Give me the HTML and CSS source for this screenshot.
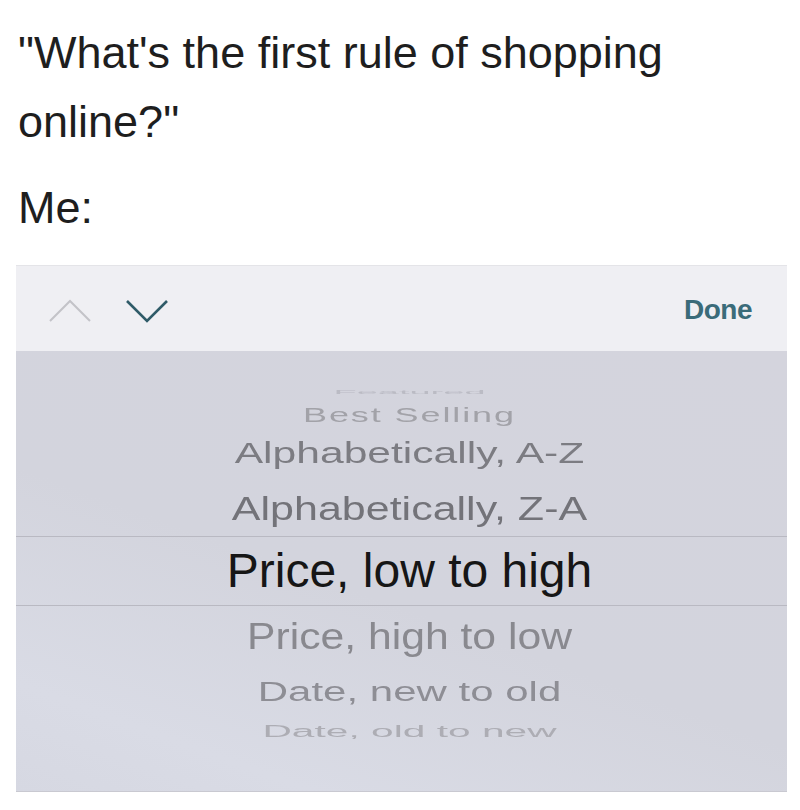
FILE: index.html
```html
<!DOCTYPE html>
<html lang="en">
<head>
<meta charset="utf-8">
<title>First rule of shopping online</title>
<link rel="stylesheet" href="styles.css">
</head>
<body>
<div class="page">
  <p class="caption">"What's the first rule of shopping online?"</p>
  <p class="caption me">Me:</p>
  <div class="panel">
    <div class="toolbar">
      <div class="arrows">
        <svg class="chev up" width="44" height="24" viewBox="0 0 44 24"><path d="M2 22 L22 2 L42 22" fill="none" stroke="#c3c3c8" stroke-width="2"/></svg>
        <svg class="chev down" width="44" height="24" viewBox="0 0 44 24"><path d="M2 2 L22 22 L42 2" fill="none" stroke="#2f5b68" stroke-width="2.6"/></svg>
      </div>
      <span class="done">Done</span>
    </div>
    <div class="picker">
      <div class="row r-featured"><span>Featured</span></div>
      <div class="row r-best"><span>Best Selling</span></div>
      <div class="row r-az"><span>Alphabetically, A-Z</span></div>
      <div class="row r-za"><span>Alphabetically, Z-A</span></div>
      <div class="row r-sel"><span>Price, low to high</span></div>
      <div class="row r-high"><span>Price, high to low</span></div>
      <div class="row r-new"><span>Date, new to old</span></div>
      <div class="row r-old"><span>Date, old to new</span></div>
    </div>
  </div>
</div>
</body>
</html>
```

FILE: styles.css
```css
html, body {
  margin: 0;
  padding: 0;
  background: #ffffff;
}

.page {
  width: 800px;
  height: 810px;
  overflow: hidden;
  font-family: "Liberation Sans", Arial, sans-serif;
}

.caption {
  margin: 18px 0 0 18px;
  width: 700px;
  font-size: 45px;
  line-height: 69px;
  color: #1e1e1e;
}

.caption.me {
  margin-top: 17px;
}

.panel {
  margin: 23px 0 0 16px;
  width: 771px;
  display: flex;
  flex-direction: column;
}

.toolbar {
  height: 86px;
  box-sizing: border-box;
  border-top: 1px solid #e4e4e8;
  background: #efeff3;
  display: flex;
  align-items: center;
  justify-content: space-between;
  padding: 0 35px 0 32px;
}

.arrows {
  display: flex;
  align-items: center;
  gap: 33px;
  padding-top: 4px;
}

.chev {
  display: block;
}

.done {
  font-size: 28px;
  font-weight: bold;
  color: #3a6b79;
  letter-spacing: -0.5px;
  padding-top: 2px;
}

.picker {
  height: 441px;
  box-sizing: border-box;
  padding-top: 30px;
  background: linear-gradient(200deg, #d4d4dd 0%, #d3d4dd 55%, #d9dbe5 85%, #d6d8e2 100%);
  border-bottom: 1px solid #c9c9d1;
  display: flex;
  flex-direction: column;
}

.row {
  display: flex;
  align-items: center;
  justify-content: center;
  padding-left: 16px;
  white-space: nowrap;
}

.row span {
  display: block;
  line-height: 1;
}

.r-featured { height: 22px; }
.r-featured span {
  font-size: 38px;
  color: rgba(140, 140, 150, 0.35);
  transform: scaleY(0.16);
  filter: blur(0.6px);
}

.r-best { height: 24px; }
.r-best span {
  font-size: 36px;
  letter-spacing: 1.9px;
  color: #a2a2a8;
  transform: scaleY(0.58);
  filter: blur(0.5px);
}

.r-az { height: 53px; }
.r-az span {
  font-size: 42.6px;
  color: #7c7c82;
  transform: scaleY(0.69);
  filter: blur(0.3px);
}

.r-za { height: 56px; }
.r-za span {
  font-size: 43px;
  color: #737379;
  transform: scaleY(0.79);
  filter: blur(0.3px);
}

.r-sel {
  height: 70px;
  box-sizing: border-box;
  border-top: 1px solid #b9b9c2;
  border-bottom: 1px solid #b9b9c2;
}
.r-sel span {
  font-size: 48px;
  color: #161616;
}

.r-high { height: 60px; }
.r-high span {
  font-size: 42.7px;
  color: #89898f;
  transform: scaleY(0.85);
  filter: blur(0.3px);
}

.r-new { height: 52px; }
.r-new span {
  font-size: 42px;
  color: #8e8e95;
  transform: scaleY(0.67);
  filter: blur(0.3px);
}

.r-old { height: 26px; }
.r-old span {
  font-size: 40.7px;
  color: #adadb4;
  transform: scaleY(0.42);
  filter: blur(0.5px);
}
```
